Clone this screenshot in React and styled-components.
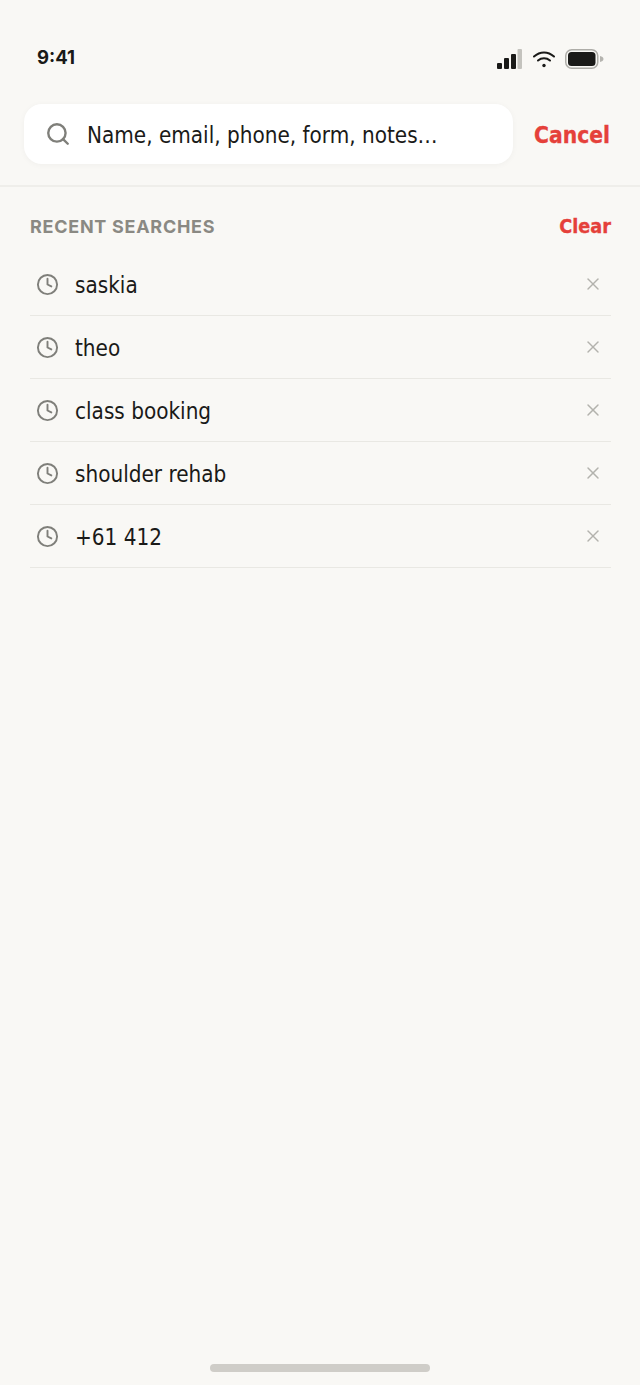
import React from "react";
import styled, { createGlobalStyle } from "styled-components";
import { Search, Clock, X } from "lucide-react";

const GlobalStyle = createGlobalStyle`
  html, body {
    margin: 0;
    padding: 0;
    background: #f9f8f5;
  }
`;

const Screen = styled.div`
  width: 640px;
  height: 1385px;
  display: flex;
  flex-direction: column;
  background: #f9f8f5;
  overflow: hidden;
`;

const StatusBar = styled.div`
  height: 104px;
  box-sizing: border-box;
  padding: 44px 36px 0 37px;
  display: flex;
  justify-content: space-between;
  align-items: flex-start;
`;

const Time = styled.span`
  font: 700 18.5px/26px Inter, sans-serif;
  color: #1a1a18;
`;

const StatusIcons = styled.div`
  display: flex;
  align-items: center;
  gap: 11px;
  margin-top: 5px;
`;

const BatteryIcon = styled.svg`
  margin-left: -1px;
`;

const Header = styled.div`
  display: flex;
  align-items: center;
  padding: 0 30px 21px 24px;
  border-bottom: 2px solid #efeeea;
`;

const SearchBox = styled.div`
  width: 489px;
  height: 60px;
  box-sizing: border-box;
  padding-left: 21px;
  display: flex;
  align-items: center;
  gap: 16px;
  background: #fff;
  border-radius: 18px;
  box-shadow: 0 1px 6px rgba(0, 0, 0, 0.04);
  color: #7f7f7a;
`;

const Placeholder = styled.span`
  padding-top: 2px;
  font: 400 22.3px/30px "DejaVu Sans Condensed", "DejaVu Sans", sans-serif;
  font-stretch: condensed;
  color: #1a1a18;
`;

const Cancel = styled.span`
  margin-left: auto;
  padding-top: 2px;
  font: 700 22.6px/30px "DejaVu Sans Condensed", "DejaVu Sans", sans-serif;
  font-stretch: condensed;
  -webkit-text-stroke: 0.3px #e5403a;
  color: #e5403a;
`;

const Section = styled.div`
  padding: 0 29px 0 30px;
`;

const SectionHead = styled.div`
  display: flex;
  justify-content: space-between;
  align-items: center;
  padding-top: 28px;
  height: 24px;
  margin-bottom: 14px;
`;

const SectionTitle = styled.span`
  font: 700 18px/24px Inter, sans-serif;
  letter-spacing: 0.72px;
  color: #8a8983;
`;

const Clear = styled.span`
  font: 700 19.7px/24px "DejaVu Sans Condensed", "DejaVu Sans", sans-serif;
  font-stretch: condensed;
  -webkit-text-stroke: 0.3px #e5403a;
  color: #e5403a;
`;

const Row = styled.div`
  height: 62px;
  padding-left: 6px;
  display: flex;
  align-items: center;
  border-bottom: 1px solid #e9e8e3;
  color: #7f7f7a;
`;

const RowText = styled.span`
  margin-left: 16px;
  padding-top: 2px;
  font: 400 22.3px/30px "DejaVu Sans Condensed", "DejaVu Sans", sans-serif;
  font-stretch: condensed;
  color: #1a1a18;
`;

const Remove = styled.span`
  margin-left: auto;
  margin-right: 8px;
  display: flex;
  color: #b3b2ad;
`;

const HomeBar = styled.div`
  width: 220px;
  height: 8px;
  margin: auto auto 13px;
  border-radius: 4px;
  background: #cfcdc8;
`;

const searches = ["saskia", "theo", "class booking", "shoulder rehab", "+61 412"];

const Signal = () => (
  <svg width="25" height="20" viewBox="0 0 25 20">
    <rect x="0" y="14" width="5" height="6" rx="1" fill="#1a1a18" />
    <rect x="7" y="9" width="5" height="11" rx="1" fill="#1a1a18" />
    <rect x="14" y="5" width="5" height="15" rx="1" fill="#1a1a18" />
    <rect x="20.5" y="0" width="4.5" height="20" rx="1" fill="#c4c3be" />
  </svg>
);

const Wifi = () => (
  <svg width="22" height="20" viewBox="1 0 22 20" fill="none" stroke="#1a1a18" strokeWidth="2" strokeLinecap="round">
    <path d="M2 7.5C8 2 16 2 22 7.5" />
    <path d="M6 11.5C9.5 8.5 14.5 8.5 18 11.5" />
    <circle cx="12" cy="16.5" r="1.7" fill="#1a1a18" stroke="none" />
  </svg>
);

const Battery = () => (
  <BatteryIcon width="39" height="20" viewBox="0 0 39 20">
    <rect x="0.75" y="0.75" width="32" height="18.5" rx="6" fill="none" stroke="#aeada8" strokeWidth="1.5" />
    <rect x="3" y="3" width="27.5" height="14" rx="3.5" fill="#1a1a18" />
    <path d="M35 7c2 .3 3.5 1.5 3.5 3s-1.5 2.7-3.5 3z" fill="#b5b4af" />
  </BatteryIcon>
);

const App = () => (
  <Screen>
    <GlobalStyle />
    <StatusBar>
      <Time>9:41</Time>
      <StatusIcons>
        <Signal />
        <Wifi />
        <Battery />
      </StatusIcons>
    </StatusBar>
    <Header>
      <SearchBox>
        <Search size={26} strokeWidth={2.2} />
        <Placeholder>Name, email, phone, form, notes…</Placeholder>
      </SearchBox>
      <Cancel>Cancel</Cancel>
    </Header>
    <Section>
      <SectionHead>
        <SectionTitle>RECENT SEARCHES</SectionTitle>
        <Clear>Clear</Clear>
      </SectionHead>
      {searches.map((term) => (
        <Row key={term}>
          <Clock size={23} strokeWidth={2} />
          <RowText>{term}</RowText>
          <Remove>
            <X size={20} strokeWidth={1.75} />
          </Remove>
        </Row>
      ))}
    </Section>
    <HomeBar />
  </Screen>
);

export default App;
